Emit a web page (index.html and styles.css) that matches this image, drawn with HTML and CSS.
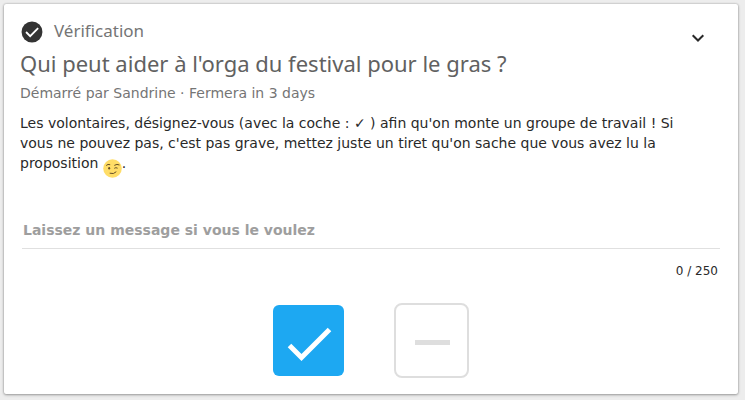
FILE: index.html
```html
<!DOCTYPE html>
<html lang="fr">
<head>
<meta charset="utf-8">
<title>Vérification</title>
<link rel="stylesheet" href="styles.css">
</head>
<body>
<main class="card">
  <header class="card-header">
    <svg class="kind-icon" viewBox="0 0 24 24" aria-hidden="true"><circle cx="12" cy="12" r="11.4"/><path d="M5.5 12l4.5 4.500 8.700-8.700"/></svg>
    <span class="kind">Vérification</span>
    <button class="menu" type="button" aria-label="Options"><svg viewBox="0 0 24 24" aria-hidden="true"><path d="M6.700 9.200l5.300 5.300 5.300-5.300"/></svg></button>
  </header>
  <h1 class="title">Qui peut aider à l'orga du festival pour le gras ?</h1>
  <p class="meta">Démarré par Sandrine · Fermera in 3 days</p>
  <p class="details">Les volontaires, désignez-vous (avec la coche : ✓ ) afin qu'on monte un groupe de travail ! Si vous ne pouvez pas, c'est pas grave, mettez juste un tiret qu'on sache que vous avez lu la proposition <svg class="emoji" viewBox="0 0 19 19" role="img" aria-label="clin d'œil"><circle class="face" cx="9.5" cy="9.5" r="9.3"/><ellipse class="eye" cx="6.2" cy="9.2" rx="1" ry="1.3"/><path d="M3.2 6.5q1.6-1.7 4-.8M11.3 6.4q2.7-1.8 5.2-.4M11.3 9.3q1.5-1.2 3.3-.1M6.7 14.2q4 1.4 6.6-1.5"/></svg>.</p>
  <form class="vote">
    <input class="message" type="text" maxlength="250" placeholder="Laissez un message si vous le voulez" aria-label="Laissez un message si vous le voulez">
    <output class="count">0 / 250</output>
    <div class="choices">
      <button class="choice yes" type="button" aria-label="Oui"><svg viewBox="0 0 71 71" aria-hidden="true"><path d="M16.500 40.500L28.500 52.500 56.500 24.500"/></svg></button>
      <button class="choice no" type="button" aria-label="Non"><svg viewBox="0 0 71 71" aria-hidden="true"><path d="M19 37.500h35"/></svg></button>
    </div>
  </form>
</main>
</body>
</html>
```
FILE: styles.css
```css
* {
  box-sizing: border-box;
}

body {
  margin: 0;
  padding: 4px 7px 6px 4px;
  background: #ededed;
  color: #292929;
  font: 14px/20px "DejaVu Sans", sans-serif;
}

.card {
  padding: 16px 16px 16px;
  border-radius: 2px;
  background: #fff;
  box-shadow: 0 1px 3px rgba(0, 0, 0, 0.3), 0 0 2px rgba(0, 0, 0, 0.3);
}

.card-header {
  display: flex;
  align-items: center;
  height: 24px;
  gap: 10px;
}

.kind-icon {
  width: 24px;
  height: 22px;
  fill: #333;
}

.kind-icon path {
  fill: none;
  stroke: #fff;
  stroke-width: 2;
}

.kind {
  padding-bottom: 2px;
  color: #757575;
  font: 17px/24px "Noto Sans", sans-serif;
}

.menu {
  align-self: flex-start;
  width: 24px;
  height: 24px;
  margin: 6px 12px 0 auto;
  padding: 0;
  border: 0;
  background: none;
}

.menu svg {
  display: block;
  fill: none;
  stroke: #292929;
  stroke-width: 2;
}

.title {
  margin: 4px 0 0;
  color: #616161;
  font: 22px/30px "Noto Sans", sans-serif;
}

.meta {
  margin: 5px 0 0;
  color: #757575;
}

.details {
  margin: 10px 0 0;
  padding-right: 24px;
}

.emoji {
  width: 19px;
  height: 19px;
  margin: 0 0 -5px;
  vertical-align: -5px;
  fill: none;
  stroke: #664e27;
  stroke-width: 1;
}

.emoji .face {
  fill: #ffdd67;
  stroke: none;
}

.emoji .eye {
  fill: #664e27;
  stroke: none;
}

.vote {
  display: flex;
  flex-direction: column;
  margin-top: 38px;
  padding: 0 2px;
}

.message {
  width: 100%;
  height: 38px;
  padding: 0 1px;
  border: 0;
  border-bottom: 1px solid #e0e0e0;
  outline: 0;
  background: none;
  font: bold 14px/20px "DejaVu Sans", sans-serif;
}

.message::placeholder {
  color: #9e9e9e;
  opacity: 1;
}

.count {
  align-self: flex-end;
  margin-top: 12px;
  padding-right: 2px;
  font-size: 12px;
}

.choices {
  display: flex;
  justify-content: center;
  align-items: center;
  gap: 50px;
  margin-top: 22px;
}

.choice {
  padding: 0;
  border-radius: 8px;
  background: #fff;
}

.choice svg {
  display: block;
  width: 71px;
  height: 71px;
  fill: none;
  stroke-width: 5;
}

.yes {
  border: 0;
  border-radius: 6px;
  background: #1da8f2;
}

.yes svg {
  stroke: #fff;
}

.no {
  border: 2px solid #dedede;
}

.no svg {
  stroke: #dedede;
}
```
